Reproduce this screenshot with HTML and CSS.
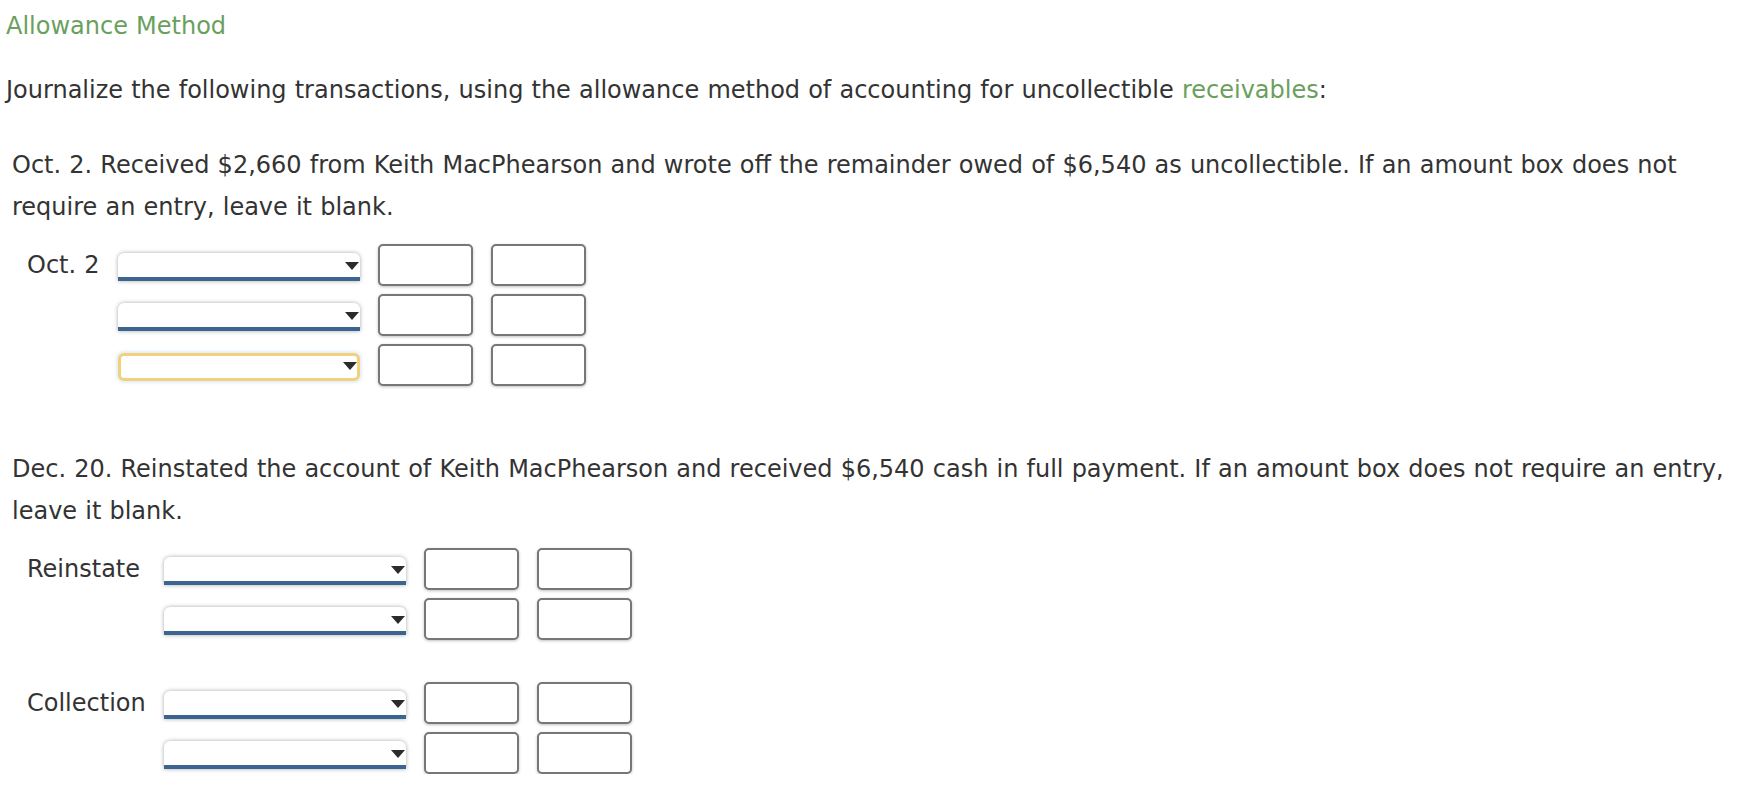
FILE: index.html
```html
<!DOCTYPE html>
<html lang="en">
<head>
<meta charset="utf-8">
<title>Allowance Method</title>
<link rel="stylesheet" href="styles.css">
</head>
<body>
<main class="page">
  <h1 class="title">Allowance Method</h1>
  <p class="intro">Journalize the following transactions, using the allowance method of accounting for uncollectible <span class="term">receivables</span>:</p>

  <section class="entry">
    <p class="prompt">Oct. 2. Received $2,660 from Keith MacPhearson and wrote off the remainder owed of $6,540 as uncollectible. If an amount box does not require an entry, leave it blank.</p>
    <div class="journal">
      <div class="label">Oct. 2</div>
      <span class="pick"><select class="acct"><option></option></select></span>
      <input class="amt" type="text">
      <input class="amt" type="text">

      <div class="label"></div>
      <span class="pick"><select class="acct"><option></option></select></span>
      <input class="amt" type="text">
      <input class="amt" type="text">

      <div class="label"></div>
      <span class="pick focus"><select class="acct"><option></option></select></span>
      <input class="amt" type="text">
      <input class="amt" type="text">
    </div>
  </section>

  <section class="entry second">
    <p class="prompt">Dec. 20. Reinstated the account of Keith MacPhearson and received $6,540 cash in full payment. If an amount box does not require an entry, leave it blank.</p>
    <div class="journal">
      <div class="label">Reinstate</div>
      <span class="pick"><select class="acct"><option></option></select></span>
      <input class="amt" type="text">
      <input class="amt" type="text">

      <div class="label"></div>
      <span class="pick"><select class="acct"><option></option></select></span>
      <input class="amt" type="text">
      <input class="amt" type="text">

      <div class="spacer"></div>

      <div class="label">Collection</div>
      <span class="pick"><select class="acct"><option></option></select></span>
      <input class="amt" type="text">
      <input class="amt" type="text">

      <div class="label"></div>
      <span class="pick"><select class="acct"><option></option></select></span>
      <input class="amt" type="text">
      <input class="amt" type="text">
    </div>
  </section>
</main>
</body>
</html>
```

FILE: styles.css
```css
html, body {
  margin: 0;
  padding: 0;
  background: #fff;
}

body {
  font-family: "DejaVu Sans", Verdana, sans-serif;
  font-size: 24px;
  line-height: 42px;
  word-spacing: 0.5px;
  color: #333;
}

.page {
  width: 1730px;
  padding-left: 6px;
  box-sizing: border-box;
}

.title {
  margin: 5px 0 0 0;
  font-size: 24px;
  font-weight: normal;
  line-height: 42px;
  color: #6a9f5e;
}

.intro {
  margin: 22px 0 0 0;
}

.term {
  color: #6a9f5e;
}

.entry {
  padding-left: 6px;
  margin-top: 33px;
}

.entry.second {
  margin-top: 62px;
}

.prompt {
  margin: 0;
}

.journal {
  display: grid;
  grid-template-columns: auto 242px 95px 95px;
  column-gap: 18px;
  row-gap: 8px;
  align-items: center;
  justify-content: start;
  padding-left: 15px;
  margin-top: 16px;
}

.label {
  line-height: 42px;
  white-space: nowrap;
}

.spacer {
  grid-column: 1 / -1;
  height: 26px;
}

.pick {
  position: relative;
  display: block;
  height: 28px;
  margin-top: 3px;
}

.acct {
  -webkit-appearance: none;
  appearance: none;
  display: block;
  width: 100%;
  height: 28px;
  margin: 0;
  padding: 0;
  box-sizing: border-box;
  border: none;
  border-bottom: 4px solid #3b6590;
  border-radius: 6px 6px 0 0;
  background: #fff;
  box-shadow: 0 0 4px rgba(0, 0, 0, 0.35);
  font: inherit;
  outline: none;
}

.pick::after {
  content: "";
  position: absolute;
  right: 1px;
  top: 9px;
  width: 0;
  height: 0;
  border-left: 7px solid transparent;
  border-right: 7px solid transparent;
  border-top: 8px solid #2b2b2b;
  pointer-events: none;
}

.pick.focus .acct {
  border: 3px solid #f1d27b;
  border-radius: 6px;
  box-shadow: 0 0 3px 2px rgba(130, 175, 230, 0.22);
}

.pick.focus::after {
  right: 3px;
}

.amt {
  display: block;
  width: 95px;
  height: 42px;
  margin: 0;
  padding: 0 6px;
  box-sizing: border-box;
  border: 2px solid #777;
  border-radius: 5px;
  background: #fff;
  box-shadow: 0 1px 3px rgba(0, 0, 0, 0.25);
  font: inherit;
  outline: none;
}
```
